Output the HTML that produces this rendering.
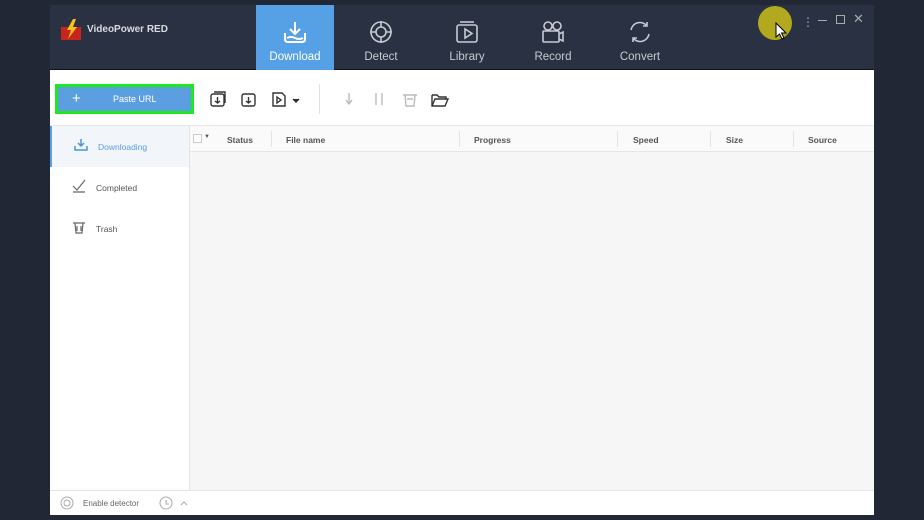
<!DOCTYPE html>
<html><head><style>
*{margin:0;padding:0;box-sizing:border-box}
body{width:924px;height:520px;background:#222736;font-family:"Liberation Sans",sans-serif;position:relative;overflow:hidden}
.win{position:absolute;left:50px;top:5px;width:824px;height:510px;background:#fff;overflow:hidden}
.hdr{position:absolute;left:0;top:0;width:824px;height:65px;background:#2a3142;border-bottom:1px solid #111}
.logo{position:absolute;left:10px;top:14px}
.brand{position:absolute;left:37px;top:19px;color:#d8dbe0;font-size:10px;font-weight:bold}
.tab{position:absolute;top:0;width:78px;height:65px;text-align:center;color:#c6cad2;font-size:11.5px}
.tab svg{position:absolute;left:26px;top:14px}
.tab span{position:absolute;left:0;right:0;top:46px}
.tab.act{background:#56a0e5;color:#fff}
.tb{position:absolute;left:0;top:65px;width:824px;height:55px;background:#fff}
.paste{position:absolute;left:5px;top:14px;width:139px;height:30px;border:3px solid #1ee81e;background:#5c9fe0;color:#fff;font-size:9px}
.side{position:absolute;left:0;top:120px;width:140px;height:365px;background:#fff;border-right:1px solid #e4e4e4;border-top:1px solid #e8e8e8}
.si{position:absolute;left:0;width:139px;height:41px;font-size:8.5px;color:#555}
.si span{position:absolute;left:46px;top:16px}
.si svg{position:absolute;left:22px;top:12px}
.main{position:absolute;left:140px;top:120px;width:684px;height:365px;background:#f6f6f6;border-top:1px solid #e8e8e8}
.th{position:absolute;left:0;top:0;width:684px;height:26px;background:#fafafa;border-bottom:1px solid #e6e6e6;font-size:8.5px;color:#555;font-weight:bold}
.th span{position:absolute;top:9px}
.th i{position:absolute;top:5px;width:1px;height:16px;background:#e4e4e4}
.ft{position:absolute;left:0;top:485px;width:824px;height:25px;background:#fff;border-top:1px solid #e4e4e4;font-size:8px;color:#666}
</style></head><body>
<div class="win">
 <div class="hdr">
  <svg class="logo" width="24" height="22" viewBox="0 0 24 22"><rect x="1" y="8" width="20" height="13" fill="#c8231c"/><path d="M13 0 L7 11 H11 L8 20 L17 8 H13 L16 0Z" fill="#f7c21a"/></svg>
  <div class="brand">VideoPower RED</div>
  <div class="tab act" style="left:206px"><svg width="26" height="26" viewBox="0 0 26 26" fill="none" stroke="#fff" stroke-width="2"><path d="M13 3v12M8 10l5 5 5-5"/><path d="M3 14v6q0 3 3 3h14q3 0 3-3v-6"/><path d="M5 19q4-2 8 0t8 0"/></svg><span>Download</span></div>
  <div class="tab" style="left:292px"><svg width="26" height="26" viewBox="0 0 26 26" fill="none" stroke="#c6cad2" stroke-width="1.6"><circle cx="13" cy="13" r="10"/><circle cx="13" cy="13" r="5"/><path d="M13 2v6M13 18v6M2 13h6M18 13h6"/></svg><span>Detect</span></div>
  <div class="tab" style="left:378px"><svg width="26" height="26" viewBox="0 0 26 26" fill="none" stroke="#c6cad2" stroke-width="1.6"><rect x="3" y="6" width="20" height="17" rx="2"/><path d="M6 3h14"/><path d="M11 10v9l7-4.5z"/></svg><span>Library</span></div>
  <div class="tab" style="left:464px"><svg width="26" height="26" viewBox="0 0 26 26" fill="none" stroke="#c6cad2" stroke-width="1.6"><circle cx="8" cy="7" r="4"/><circle cx="17" cy="7" r="4"/><rect x="3" y="12" width="16" height="11" rx="1"/><path d="M19 15l4-2v9l-4-2"/></svg><span>Record</span></div>
  <div class="tab" style="left:551px"><svg width="26" height="26" viewBox="0 0 26 26" fill="none" stroke="#c6cad2" stroke-width="1.6"><path d="M4 11a9 9 0 0 1 16-4M22 15a9 9 0 0 1-16 4"/><path d="M20 3v4h-4M6 23v-4h4"/></svg><span>Convert</span></div>
  <div style="position:absolute;left:708px;top:1px;width:34px;height:34px;border-radius:50%;background:#b3a91f"></div>
  <div style="position:absolute;left:752px;top:10px;color:#aaa;font-size:12px">⋮</div>
  <div style="position:absolute;left:768px;top:15px;width:9px;height:1px;background:#aaa"></div>
  <div style="position:absolute;left:786px;top:10px;width:9px;height:9px;border:1px solid #aaa"></div>
  <div style="position:absolute;left:803px;top:6px;color:#aaa;font-size:13px">✕</div>
  <svg style="position:absolute;left:725px;top:17px" width="12" height="18" viewBox="0 0 12 18"><path d="M1 1v14l3.5-3 2.5 5 2-1-2.5-5H11z" fill="#fff" stroke="#000"/></svg>
 </div>
 <div class="tb">
  <div class="paste"><span style="position:absolute;left:14px;top:3px;font-size:15px">+</span><span style="position:absolute;left:55px;top:7px">Paste URL</span></div>
  <svg style="position:absolute;left:160px;top:20px" width="100" height="18" viewBox="0 0 100 18" fill="none" stroke="#333" stroke-width="1.4"><rect x="1" y="4" width="13" height="12" rx="2"/><path d="M4 2h11v11"/><path d="M7.5 7v6M5 11l2.5 2 2.5-2"/><rect x="32" y="4" width="13" height="12" rx="2"/><path d="M38.5 7v6M36 11l2.5 2 2.5-2"/><path d="M63 3h9l3 3v10h-12z"/><path d="M67 7v6l4-3z"/><path d="M83 9l3 3 3-3" fill="#333"/></svg>
  <div style="position:absolute;left:269px;top:14px;width:1px;height:30px;background:#e0e0e0"></div>
  <svg style="position:absolute;left:292px;top:20px" width="110" height="18" viewBox="0 0 110 18" fill="none" stroke="#bbb" stroke-width="1.4"><path d="M7 3v10M4 10l3 4 3-4"/><path d="M34 3v12M40 3v12"/><path d="M61 5h14M63 5l1 11h8l1-11M65 9h6"/><path stroke="#333" d="M90 5h5l2 2h7v2M90 5v11h13l3-7H93l-3 7"/></svg>
 </div>
 <div class="side">
  <div class="si" style="top:0;background:#f2f5f9;border-left:2px solid #56a0e5;color:#5b9ee0"><svg width="14" height="14" viewBox="0 0 14 14" fill="none" stroke="#4a94de" stroke-width="1.5"><path d="M7 1v7M4 5l3 3 3-3M1 8v4h12V8"/></svg><span>Downloading</span></div>
  <div class="si" style="top:41px"><svg width="14" height="14" viewBox="0 0 14 14" fill="none" stroke="#666" stroke-width="1.2"><path d="M1 7l4 4 8-10M1 13h12"/></svg><span>Completed</span></div>
  <div class="si" style="top:82px"><svg width="14" height="14" viewBox="0 0 14 14" fill="none" stroke="#666" stroke-width="1.2"><path d="M1 3h12M3 3l1 10h6l1-10M5 6v5M9 6v5"/></svg><span>Trash</span></div>
 </div>
 <div class="main">
  <div class="th"><div style="position:absolute;left:3px;top:8px;width:9px;height:9px;border:1px solid #ccc;background:#fff"></div><span style="left:14px;top:8px;font-size:6px">▼</span>
   <span style="left:37px">Status</span><i style="left:81px"></i><span style="left:96px">File name</span><i style="left:269px"></i><span style="left:284px">Progress</span><i style="left:427px"></i><span style="left:443px">Speed</span><i style="left:520px"></i><span style="left:536px">Size</span><i style="left:603px"></i><span style="left:618px">Source</span></div>
 </div>
 <div class="ft">
  <svg style="position:absolute;left:10px;top:5px" width="14" height="14" fill="none" stroke="#aaa"><circle cx="7" cy="7" r="6"/><circle cx="7" cy="7" r="3"/></svg>
  <span style="position:absolute;left:33px;top:8px">Enable detector</span>
  <svg style="position:absolute;left:109px;top:5px" width="30" height="14" fill="none" stroke="#aaa"><circle cx="7" cy="7" r="6"/><path d="M7 4v4h3M22 9l3-3 3 3"/></svg>
 </div>
</div>
</body></html>
